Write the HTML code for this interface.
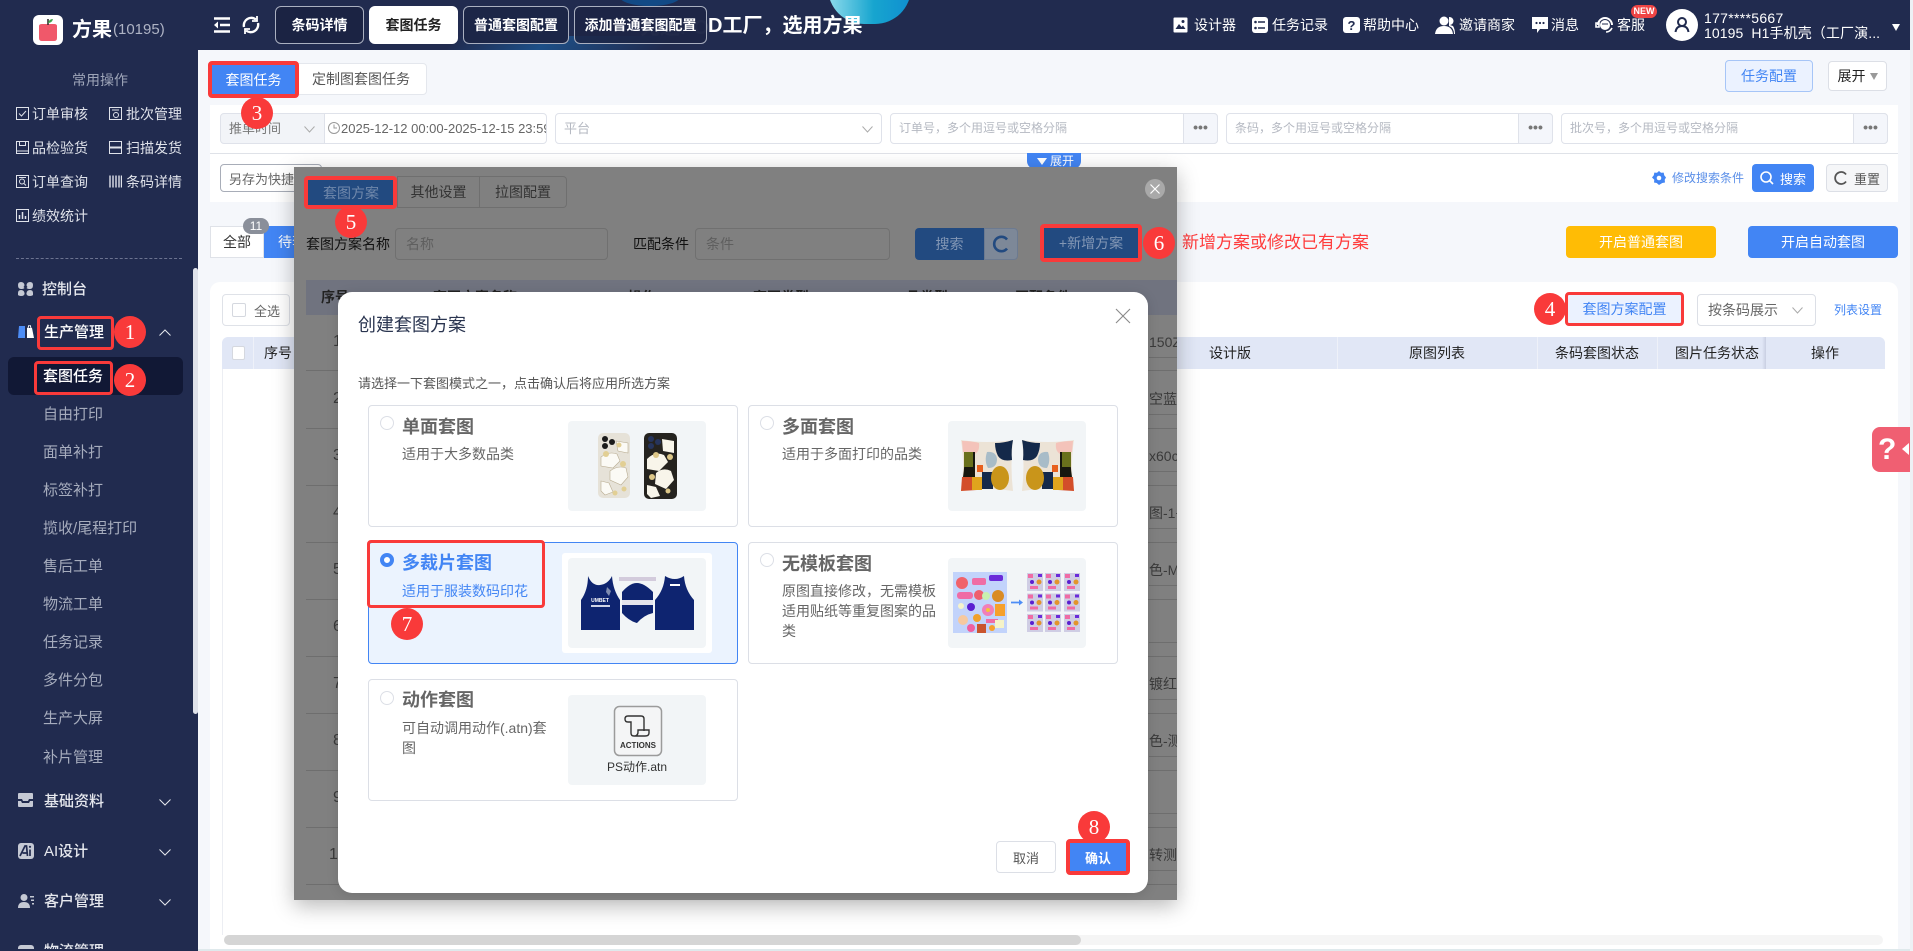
<!DOCTYPE html>
<html lang="zh-CN">
<head>
<meta charset="utf-8">
<title>方果 套图任务</title>
<style>
*{box-sizing:border-box}
html,body{margin:0;padding:0}
body{position:relative;width:1913px;height:951px;overflow:hidden;background:#f5f7fb;font-family:"Liberation Sans","Noto Sans CJK SC",sans-serif;font-size:14px;color:#333}
.a{position:absolute}
.t{position:absolute;white-space:nowrap;line-height:20px;height:20px}
.b{position:absolute;display:flex;align-items:center;justify-content:center;white-space:nowrap;border-radius:4px}
.c{position:absolute;width:32px;height:32px;border-radius:50%;background:#f93a3a;color:#fff;font-family:"Liberation Serif",serif;font-size:21px;line-height:32px;text-align:center;z-index:30}
.r{position:absolute;border:3px solid #f93a3a;border-radius:4px;z-index:29}
.r4{border-width:4px}
.side{color:#dfe2ea}
.sub{color:#a6acbd;font-size:15px}
.nav{color:#e6e8ee;font-size:15px;font-weight:500}
.tab{position:absolute;top:6px;height:38px;border:1px solid #aab0c0;border-radius:6px;display:flex;align-items:center;justify-content:center;color:#fff;font-weight:700;font-size:14px;white-space:nowrap}
.inp{position:absolute;top:113px;height:31px;background:#fff;border:1px solid #dfe2ea;border-radius:4px;font-size:12px;color:#b5b9c2;line-height:29px;padding-left:8px;white-space:nowrap;overflow:hidden}
.dots{position:absolute;top:113px;width:35px;height:31px;background:#f4f6fb;border:1px solid #dfe2ea;border-radius:0 4px 4px 0;color:#777;text-align:center;line-height:27px;font-size:14px;font-weight:700;letter-spacing:0}
.ln{position:absolute;height:1px;background:#6e6e6e}
.rt{position:absolute;left:1149px;width:28px;overflow:hidden;white-space:nowrap;color:#3a3a3a;font-size:14px;line-height:20px;height:20px}
.lnum{position:absolute;color:#3a3a3a;font-size:16px;line-height:20px}
.card{position:absolute;width:370px;height:122px;background:#fff;border:1px solid #dcdfe6;border-radius:4px}
.radio{position:absolute;width:14px;height:14px;border:1px solid #dcdfe6;border-radius:50%;background:#fff}
.ct{position:absolute;font-size:18px;font-weight:700;color:#666;line-height:24px;white-space:nowrap}
.cd{position:absolute;font-size:14px;color:#666;line-height:20px;white-space:nowrap}
.im{position:absolute;width:138px;height:90px;background:#f2f5f7;border-radius:4px;overflow:hidden}
.th{position:absolute;top:343px;color:#222;line-height:20px;white-space:nowrap}
.chev{position:absolute}
</style>
</head>
<body>

<!-- sidebar -->
<div class="a" style="left:0;top:0;width:198px;height:951px;background:#212b4f"></div>
<div class="a" style="left:193px;top:268px;width:5px;height:446px;background:#dfe2ea;border-radius:3px"></div>

<!-- header -->
<div class="a" style="left:0;top:0;width:1910px;height:50px;background:#212b4f;overflow:hidden">
  <div class="a" style="left:433px;top:36px;width:300px;height:60px;background:linear-gradient(100deg,#212b4f 0%,#1d4f87 30%,#212b4f 70%);transform:skewX(-40deg)"></div>
  <div class="a" style="left:828px;top:-40px;width:83px;height:64px;border-radius:0 0 36px 36px;background:linear-gradient(90deg,#8fdcec,#17a5cf 55%,#0f8fd0)"></div>
  <div class="a" style="left:620px;top:-12px;width:60px;height:18px;border-radius:50%;background:#124a86"></div>
</div>

<!-- logo -->
<div class="a" style="left:33px;top:15px;width:30px;height:30px;background:#fff;border-radius:6px"></div>
<svg class="a" style="left:33px;top:15px" width="30" height="30" viewBox="0 0 30 30"><path d="M6 11q0-2 3-2h12q3 0 3 2v12q0 3-3 3H9q-3 0-3-3z" fill="#f0586a"/><path d="M15 10V4" stroke="#333" stroke-width="1.6"/><path d="M15 8q1-4 5-4q-1 4-5 4z" fill="#3fa34d"/></svg>
<div class="t" style="left:72px;top:20px;font-size:20px;font-weight:700;color:#fff">方果</div>
<div class="t" style="left:113px;top:20px;font-size:15px;color:#aeb3c4">(10195)</div>

<svg class="a" style="left:213px;top:17px" width="18" height="16" viewBox="0 0 18 16"><path d="M1 1.500h16M7 8h10M1 14.500h16" stroke="#fff" stroke-width="2.400"/><path d="M5 4.500 1 8l4 3.500z" fill="#fff"/></svg>
<svg class="a" style="left:241px;top:15px" width="20" height="20" viewBox="0 0 20 20" fill="none" stroke="#fff" stroke-width="2.400"><path d="M3 12a7.500 7.500 0 0 1 12-7.500"/><path d="M17 8a7.500 7.500 0 0 1-12 7.500"/><path d="M16 1v5h-5M4 19v-5h5" stroke-width="1.800"/></svg>

<div class="tab" style="left:275px;width:89px;background:#1b2343">条码详情</div>
<div class="tab" style="left:369px;width:89px;background:#fff;color:#222;border-color:#fff">套图任务</div>
<div class="tab" style="left:463px;width:106px;background:#1c2647">普通套图配置</div>

<!-- banner text -->
<div class="t" style="left:640px;top:15px;font-size:20px;font-weight:700;color:#3c4565;line-height:26px;height:26px">先进PO</div>
<div class="t" style="left:708px;top:13px;font-size:20px;font-weight:700;color:#fff;line-height:26px;height:26px">D工厂，选用方果</div>
<div class="tab" style="left:574px;width:133px;background:rgba(28,36,68,.82)">添加普通套图配置</div>

<!-- header right -->
<svg class="a" style="left:1173px;top:17px" width="15" height="16" viewBox="0 0 15 16"><rect x=".5" y=".5" width="14" height="15" rx="1" fill="#fff"/><path d="M2.500 12 6 7l2.500 3L10 8.500 12.500 12z" fill="#212b4f"/><circle cx="10" cy="4.500" r="1.500" fill="#212b4f"/></svg>
<div class="t" style="left:1194px;top:15px;color:#fff">设计器</div>
<svg class="a" style="left:1252px;top:17px" width="16" height="16" viewBox="0 0 16 16"><rect width="16" height="16" rx="3" fill="#fff"/><path d="M6 5h7M6 11h7" stroke="#212b4f" stroke-width="1.600"/><circle cx="3.500" cy="5" r="1.300" fill="#212b4f"/><circle cx="3.500" cy="11" r="1.300" fill="#212b4f"/></svg>
<div class="t" style="left:1272px;top:15px;color:#fff">任务记录</div>
<svg class="a" style="left:1343px;top:17px" width="17" height="16" viewBox="0 0 17 16"><rect width="17" height="16" rx="3" fill="#fff"/><text x="8.500" y="13" font-size="13" font-weight="700" text-anchor="middle" fill="#212b4f" font-family="Liberation Sans">?</text></svg>
<div class="t" style="left:1363px;top:15px;color:#fff">帮助中心</div>
<svg class="a" style="left:1435px;top:16px" width="20" height="18" viewBox="0 0 20 18" fill="#fff"><circle cx="9" cy="5" r="4.500"/><path d="M0 18q1-8 9-8t9 8z"/><path d="M14 1a4 4 0 0 1 1 8l3 1q2 3 2 8h-1q0-6-5-8z"/></svg>
<div class="t" style="left:1459px;top:15px;color:#fff">邀请商家</div>
<svg class="a" style="left:1531px;top:16px" width="18" height="18" viewBox="0 0 18 18"><path d="M1 1h16v12H9l-3 4v-4H1z" fill="#fff"/><circle cx="5.500" cy="7" r="1.100" fill="#212b4f"/><circle cx="9" cy="7" r="1.100" fill="#212b4f"/><circle cx="12.500" cy="7" r="1.100" fill="#212b4f"/></svg>
<div class="t" style="left:1551px;top:15px;color:#fff">消息</div>
<svg class="a" style="left:1595px;top:16px" width="19" height="18" viewBox="0 0 19 18" fill="none" stroke="#fff"><path d="M3 9a7 7 0 0 1 14 0" stroke-width="2"/><circle cx="10" cy="9" r="5" fill="#fff" stroke="none"/><path d="M1 7v4h3V7zM11 16q4 0 6-4" stroke-width="1.600"/><path d="M7 8h6" stroke="#212b4f"/></svg>
<div class="t" style="left:1617px;top:15px;color:#fff">客服</div>
<div class="a" style="left:1631px;top:5px;width:26px;height:13px;background:#ee4444;border-radius:7px;color:#fff;font-size:9px;font-weight:700;line-height:13px;text-align:center">NEW</div>
<div class="a" style="left:1666px;top:9px;width:32px;height:32px;border-radius:50%;background:#fff"></div>
<svg class="a" style="left:1674px;top:16px" width="16" height="17" viewBox="0 0 16 17" fill="none" stroke="#212b4f" stroke-width="2"><circle cx="8" cy="6" r="4"/><path d="M1.500 16q1-6 6.500-6t6.500 6"/></svg>
<div class="t" style="left:1704px;top:8px;color:#fff;font-size:14px;letter-spacing:.3px">177****5667</div>
<div class="t" style="left:1704px;top:23px;color:#fff;font-size:14px;letter-spacing:.1px">10195&nbsp; H1手机壳（工厂演...</div>
<div class="a" style="left:1892px;top:24px;width:0;height:0;border-left:4.500px solid transparent;border-right:4.500px solid transparent;border-top:7px solid #fff"></div>

<!-- sidebar contents -->
<div class="t" style="left:72px;top:70px;color:#9ea5b8">常用操作</div>
<svg class="a" style="left:16px;top:107px" width="13" height="13" viewBox="0 0 13 13" fill="none" stroke="#dfe2ea"><rect x=".5" y=".5" width="12" height="12"/><path d="M3 6.500l2.500 2.500L10 4"/></svg>
<div class="t side" style="left:32px;top:104px">订单审核</div>
<svg class="a" style="left:109px;top:107px" width="13" height="13" viewBox="0 0 13 13" fill="none" stroke="#dfe2ea"><rect x=".5" y=".5" width="12" height="12"/><path d="M3 3h7"/><circle cx="7" cy="8" r="2.500"/></svg>
<div class="t side" style="left:126px;top:104px">批次管理</div>
<svg class="a" style="left:16px;top:141px" width="13" height="13" viewBox="0 0 13 13" fill="none" stroke="#dfe2ea"><path d="M.5.500h12v12H.500zM.5 10h12M3.500.5v4h6v-4"/></svg>
<div class="t side" style="left:32px;top:138px">品检验货</div>
<svg class="a" style="left:109px;top:141px" width="13" height="13" viewBox="0 0 13 13" fill="none" stroke="#dfe2ea"><rect x=".5" y=".5" width="12" height="12"/><path d="M0 6.500h13" stroke-width="2"/></svg>
<div class="t side" style="left:126px;top:138px">扫描发货</div>
<svg class="a" style="left:16px;top:175px" width="13" height="13" viewBox="0 0 13 13" fill="none" stroke="#dfe2ea"><rect x=".5" y=".5" width="12" height="12"/><circle cx="6" cy="6.500" r="2.500"/><path d="M8 8.500l2 2M3 2.500h7"/></svg>
<div class="t side" style="left:32px;top:172px">订单查询</div>
<svg class="a" style="left:109px;top:175px" width="13" height="13" viewBox="0 0 13 13" stroke="#dfe2ea"><path d="M1 .5v12M4 .5v12M7 .5v12M10 .5v12M12.500 .5v12" stroke-width="1.400"/></svg>
<div class="t side" style="left:126px;top:172px">条码详情</div>
<svg class="a" style="left:16px;top:209px" width="13" height="13" viewBox="0 0 13 13" fill="none" stroke="#dfe2ea"><rect x=".5" y=".5" width="12" height="12"/><path d="M3.500 10V6M6.500 10V3M9.500 10V7" stroke-width="1.500"/></svg>
<div class="t side" style="left:32px;top:206px">绩效统计</div>
<div class="a" style="left:16px;top:258px;width:166px;border-top:1px dashed #6c7390"></div>

<svg class="a" style="left:18px;top:282px" width="15" height="14" viewBox="0 0 15 14" fill="#c5c9d4"><path d="M0 3q0-3 3-3t3.500 3q0 1-1 2l1 1q-1 1-3.500 1Q0 7 0 3zM15 3q0-3-3-3T8.500 3q0 1 1 2l-1 1q1 1 3.500 1 3 0 3-4zM0 11q0-3 3-3t3.500 3-3.500 3-3-3zM15 11q0-3-3-3t-3.500 3 3.500 3 3-3z"/></svg>
<div class="t nav" style="left:42px;top:280px">控制台</div>
<svg class="a" style="left:18px;top:325px" width="16" height="14" viewBox="0 0 16 14"><path d="M1 1h6v12H0z" fill="#4d8df6"/><path d="M9 3h5l2 10H9z" fill="#fff"/><path d="M10 3l1-3M13 3l-1-3" stroke="#fff"/></svg>
<div class="t nav" style="left:44px;top:323px;color:#fff">生产管理</div>
<svg class="chev" style="left:159px;top:329px" width="12" height="7" viewBox="0 0 12 7" fill="none" stroke="#e6e8ee"><path d="M.5 6.500 6 1l5.500 5.500"/></svg>
<div class="a" style="left:8px;top:357px;width:175px;height:38px;background:#111835;border-radius:6px"></div>
<div class="t nav" style="left:43px;top:367px;color:#fff">套图任务</div>
<div class="t sub" style="left:43px;top:405px">自由打印</div>
<div class="t sub" style="left:43px;top:443px">面单补打</div>
<div class="t sub" style="left:43px;top:481px">标签补打</div>
<div class="t sub" style="left:43px;top:519px">揽收/尾程打印</div>
<div class="t sub" style="left:43px;top:557px">售后工单</div>
<div class="t sub" style="left:43px;top:595px">物流工单</div>
<div class="t sub" style="left:43px;top:633px">任务记录</div>
<div class="t sub" style="left:43px;top:671px">多件分包</div>
<div class="t sub" style="left:43px;top:709px">生产大屏</div>
<div class="t sub" style="left:43px;top:748px">补片管理</div>

<svg class="a" style="left:18px;top:793px" width="15" height="14" viewBox="0 0 15 14" fill="#c5c9d4"><path d="M0 1q0-1 1-1h13q1 0 1 1v5h-4l-1 2H5L4 6H0zM0 8h3l1 2h7l1-2h3v5q0 1-1 1H1q-1 0-1-1z"/></svg>
<div class="t nav" style="left:44px;top:792px">基础资料</div>
<svg class="chev" style="left:159px;top:799px" width="12" height="7" viewBox="0 0 12 7" fill="none" stroke="#e6e8ee"><path d="M.5.500 6 6l5.500-5.500"/></svg>
<svg class="a" style="left:18px;top:843px" width="16" height="16" viewBox="0 0 16 16"><rect width="16" height="16" rx="3" fill="#c5c9d4"/><path d="M2 13 7 3h1.500l1 10M4.500 10h4.500M12 6.500V13" stroke="#212b4f" stroke-width="1.700" fill="none"/><circle cx="12" cy="3.800" r="1.100" fill="#212b4f"/></svg>
<div class="t nav" style="left:44px;top:842px">AI设计</div>
<svg class="chev" style="left:159px;top:849px" width="12" height="7" viewBox="0 0 12 7" fill="none" stroke="#e6e8ee"><path d="M.5.500 6 6l5.500-5.500"/></svg>
<svg class="a" style="left:18px;top:894px" width="16" height="14" viewBox="0 0 16 14" fill="#c5c9d4"><circle cx="6" cy="3.500" r="3.500"/><path d="M0 14q0-6 6-6t6 6zM12 2h4v1.500h-4zM13 5.500h3V7h-3zM14 9h2v1.500h-2z"/></svg>
<div class="t nav" style="left:44px;top:892px">客户管理</div>
<svg class="chev" style="left:159px;top:899px" width="12" height="7" viewBox="0 0 12 7" fill="none" stroke="#e6e8ee"><path d="M.5.500 6 6l5.500-5.500"/></svg>
<div class="a" style="left:18px;top:945px;width:16px;height:6px;background:#c5c9d4;border-radius:3px 3px 0 0"></div>
<div class="t nav" style="left:44px;top:943px;height:8px;overflow:hidden;line-height:18px">物流管理</div>

<!-- main top -->
<div class="b" style="left:212px;top:65px;width:83px;height:29px;background:#4285f4;color:#fff;border-radius:0">套图任务</div>
<div class="b" style="left:295px;top:63px;width:132px;height:32px;background:#fff;border:1px solid #e4e7ed;color:#555;border-radius:0 4px 4px 0">定制图套图任务</div>
<div class="b" style="left:1725px;top:60px;width:88px;height:32px;background:#ebf2ff;border:1px solid #a6c5f7;color:#4285f4">任务配置</div>
<div class="b" style="left:1828px;top:61px;width:59px;height:30px;background:#fff;border:1px solid #dcdfe6;color:#222">展开<span style="display:inline-block;margin-left:4px;border-left:4.500px solid transparent;border-right:4.500px solid transparent;border-top:7px solid #999"></span></div>

<!-- filter panel -->
<div class="a" style="left:210px;top:105px;width:1688px;height:97px;background:#fff"></div>
<div class="a" style="left:210px;top:153px;width:1688px;height:1px;background:#dfe2e8"></div>
<div class="inp" style="left:220px;width:105px;background:#f2f4f8;color:#777;font-size:13px;border-radius:4px 0 0 4px">推单时间</div>
<svg class="a" style="left:304px;top:126px" width="11" height="7" viewBox="0 0 11 7" fill="none" stroke="#aaa"><path d="M.5.500 5.500 6l5-5.500"/></svg>
<div class="inp" style="left:324px;width:223px;font-size:13px;color:#666;padding-left:16px;border-radius:0 4px 4px 0">2025-12-12 00:00-2025-12-15 23:59</div>
<svg class="a" style="left:328px;top:122px" width="12" height="12" viewBox="0 0 12 12" fill="none" stroke="#999"><circle cx="6" cy="6" r="5.500"/><path d="M6 2.500V6h3"/></svg>
<div class="inp" style="left:555px;width:327px;font-size:13px;">平台</div>
<svg class="a" style="left:862px;top:126px" width="11" height="7" viewBox="0 0 11 7" fill="none" stroke="#aaa"><path d="M.5.500 5.500 6l5-5.500"/></svg>
<div class="inp" style="left:890px;width:328px">订单号，多个用逗号或空格分隔</div><div class="dots" style="left:1183px">•••</div>
<div class="inp" style="left:1226px;width:327px">条码，多个用逗号或空格分隔</div><div class="dots" style="left:1518px">•••</div>
<div class="inp" style="left:1561px;width:327px">批次号，多个用逗号或空格分隔</div><div class="dots" style="left:1853px">•••</div>

<div class="a" style="left:1027px;top:153px;width:54px;height:16px;background:#4285f4;border-radius:0 0 8px 8px;color:#fff;font-size:12px;line-height:16px;padding-left:23px">展开</div>
<div class="a" style="left:1037px;top:158px;border-left:5px solid transparent;border-right:5px solid transparent;border-top:7px solid #fff"></div>

<div class="b" style="left:220px;top:164px;width:102px;height:28px;background:#fff;border:1px solid #a8adb8;color:#666;font-size:13px;justify-content:flex-start;padding-left:8px;overflow:hidden">另存为快捷查询</div>

<svg class="a" style="left:1652px;top:171px" width="14" height="14" viewBox="0 0 14 14"><path d="M7 0l2 1.800 2.700-.2.500 2.700L14 6.500l-1.300 2.300.3 2.700-2.700.5L7 14l-2.300-2-2.700-.5.300-2.700L0 6.500l1.800-2.200.500-2.700L5 1.800z" fill="#4285f4"/><circle cx="7" cy="7" r="2.300" fill="#fff"/></svg>
<div class="t" style="left:1672px;top:168px;color:#5b8fe8;font-size:12px">修改搜索条件</div>
<div class="b" style="left:1752px;top:164px;width:62px;height:28px;background:#4285f4;color:#fff;font-size:13px"><svg width="14" height="14" viewBox="0 0 14 14" fill="none" stroke="#fff" stroke-width="1.600" style="margin-right:6px"><circle cx="6" cy="6" r="5"/><path d="M9.500 9.500 13 13"/></svg>搜索</div>
<div class="b" style="left:1826px;top:164px;width:62px;height:28px;background:#f5f6f8;border:1px solid #dcdfe6;color:#555;font-size:13px"><svg width="14" height="14" viewBox="0 0 14 14" fill="none" stroke="#555" stroke-width="1.800" style="margin-right:6px"><path d="M12 3.500A6 6 0 1 0 12 10.500"/></svg>重置</div>

<!-- status row -->
<div class="b" style="left:210px;top:226px;width:54px;height:32px;background:#fff;border:1px solid #dfe2e8;color:#333;border-radius:0">全部</div>
<div class="b" style="left:264px;top:226px;width:60px;height:32px;background:#4285f4;color:#fff;border-radius:0;justify-content:flex-start;padding-left:14px">待套图</div>
<div class="a" style="left:243px;top:218px;width:26px;height:16px;background:#8a8f9a;border-radius:8px;color:#fff;font-size:12px;line-height:16px;text-align:center">11</div>
<div class="t" style="left:1182px;top:233px;color:#ff3b3b;font-size:17px">新增方案或修改已有方案</div>
<div class="b" style="left:1566px;top:226px;width:150px;height:32px;background:#ffbc05;color:#fff">开启普通套图</div>
<div class="b" style="left:1748px;top:226px;width:150px;height:32px;background:#4285f4;color:#fff">开启自动套图</div>

<!-- table panel -->
<div class="a" style="left:210px;top:282px;width:1688px;height:667px;background:#fff;border-radius:10px 10px 0 0"></div>
<div class="b" style="left:222px;top:294px;width:68px;height:32px;background:#fff;border:1px solid #dfe2e8;color:#666;font-size:13px;justify-content:flex-start;padding-left:9px"><span style="display:inline-block;width:14px;height:14px;border:1px solid #d5d8df;border-radius:2px;margin-right:8px"></span>全选</div>
<div class="b" style="left:1568px;top:295px;width:113px;height:28px;background:#ebf2ff;color:#4285f4;font-size:14px;border-radius:0">套图方案配置</div>
<div class="b" style="left:1697px;top:294px;width:119px;height:32px;background:#fff;border:1px solid #dcdfe6;color:#666;justify-content:flex-start;padding-left:10px">按条码展示</div>
<svg class="a" style="left:1792px;top:307px" width="11" height="7" viewBox="0 0 11 7" fill="none" stroke="#aaa"><path d="M.5.500 5.500 6l5-5.500"/></svg>
<div class="t" style="left:1834px;top:300px;color:#4285f4;font-size:12px">列表设置</div>

<div class="a" style="left:222px;top:337px;width:1663px;height:32px;background:#e1e7f6;border-radius:6px 6px 0 0"></div>
<div class="a" style="left:222px;top:369px;width:1px;height:566px;background:#eceef3"></div>
<div class="a" style="left:232px;top:346px;width:13px;height:14px;background:#fff;border:1px solid #d5d8df;border-radius:2px"></div>
<div class="a" style="left:253px;top:337px;width:1px;height:32px;background:#eef1f9"></div>
<div class="th" style="left:264px">序号</div>
<div class="th" style="left:1209px">设计版</div>
<div class="th" style="left:1409px">原图列表</div>
<div class="th" style="left:1555px">条码套图状态</div>
<div class="th" style="left:1675px">图片任务状态</div>
<div class="th" style="left:1811px">操作</div>
<div class="a" style="left:1337px;top:337px;width:1px;height:32px;background:#eef1f9"></div>
<div class="a" style="left:1537px;top:337px;width:1px;height:32px;background:#eef1f9"></div>
<div class="a" style="left:1657px;top:337px;width:1px;height:32px;background:#eef1f9"></div>
<div class="a" style="left:1762px;top:337px;width:4px;height:32px;background:linear-gradient(90deg,#e1e7f6,#c9cfe2)"></div>

<!-- scrollbar -->
<div class="a" style="left:224px;top:935px;width:1659px;height:10px;background:#f5f5f5;border-radius:5px"></div>
<div class="a" style="left:224px;top:935px;width:857px;height:10px;background:#d5d5d5;border-radius:5px"></div>
<div class="a" style="left:0;top:949px;width:1913px;height:2px;background:#dfe9ec"></div>
<div class="a" style="left:1910px;top:0;width:3px;height:951px;background:#edf1f5"></div>
<div class="a" style="left:0;top:949px;width:198px;height:2px;background:#212b4f"></div>

<!-- question float -->
<div class="a" style="left:1872px;top:427px;width:38px;height:45px;background:#f05f72;border-radius:8px 0 0 8px;color:#fff;font-size:30px;font-weight:700;line-height:45px;padding-left:6px">?</div>
<div class="a" style="left:1902px;top:443px;border-top:6px solid transparent;border-bottom:6px solid transparent;border-right:7px solid #fff"></div>

<!-- dim dialog -->
<div class="a" style="left:294px;top:167px;width:883px;height:733px;background:#808080;box-shadow:0 6px 20px rgba(0,0,0,.28)"></div>
<div class="b" style="left:307px;top:179px;width:88px;height:27px;background:#224a80;color:#7088ab;border-radius:0">套图方案</div>
<div class="b" style="left:397px;top:176px;width:83px;height:32px;border:1px solid #6f6f6f;color:#333;border-radius:0">其他设置</div>
<div class="b" style="left:480px;top:176px;width:87px;height:32px;border:1px solid #6f6f6f;border-left:none;color:#333;border-radius:0 4px 4px 0">拉图配置</div>
<div class="a" style="left:1145px;top:179px;width:20px;height:20px;border-radius:50%;background:#a9a9a9"></div>
<svg class="a" style="left:1145px;top:179px" width="20" height="20" viewBox="0 0 20 20" stroke="#fff" stroke-width="1.200"><path d="M5.500 5.500l9 9M14.500 5.500l-9 9"/></svg>
<div class="t" style="left:306px;top:234px;color:#111">套图方案名称</div>
<div class="a" style="left:395px;top:228px;width:213px;height:32px;border:1px solid #707070;border-radius:4px;color:#5f5f5f;line-height:30px;padding-left:10px">名称</div>
<div class="t" style="left:633px;top:234px;color:#111">匹配条件</div>
<div class="a" style="left:695px;top:228px;width:195px;height:32px;border:1px solid #707070;border-radius:4px;color:#5f5f5f;line-height:30px;padding-left:10px">条件</div>
<div class="b" style="left:915px;top:228px;width:69px;height:32px;background:#224a80;color:#8397b5;border-radius:4px 0 0 4px">搜索</div>
<div class="a" style="left:984px;top:228px;width:34px;height:32px;background:#7d8898;border:1px solid #6c7a90;border-radius:0 4px 4px 0"></div>
<svg class="a" style="left:992px;top:235px" width="18" height="18" viewBox="0 0 18 18" fill="none" stroke="#224a80" stroke-width="2.600"><path d="M15 4.500A7.200 7.200 0 1 0 15 13.500"/></svg>
<div class="b" style="left:1044px;top:228px;width:94px;height:30px;background:#224a80;color:#8397b5;border-radius:0">+新增方案</div>

<div class="a" style="left:306px;top:280px;width:871px;height:35px;background:#70737f"></div>
<div class="t" style="left:321px;top:287px;font-weight:700;color:#222">序号</div>
<div class="t" style="left:433px;top:287px;font-weight:700;color:#222">套图方案名称</div>
<div class="t" style="left:628px;top:287px;font-weight:700;color:#222">操作</div>
<div class="t" style="left:753px;top:287px;font-weight:700;color:#222">套图类型</div>
<div class="t" style="left:906px;top:287px;font-weight:700;color:#222">品类型</div>
<div class="t" style="left:1015px;top:287px;font-weight:700;color:#222">匹配条件</div>

<!-- dim rows -->
<div class="ln" style="left:306px;top:370px;width:871px"></div>
<div class="ln" style="left:306px;top:428px;width:871px"></div>
<div class="ln" style="left:306px;top:485px;width:871px"></div>
<div class="ln" style="left:306px;top:542px;width:871px"></div>
<div class="ln" style="left:306px;top:599px;width:871px"></div>
<div class="ln" style="left:306px;top:656px;width:871px"></div>
<div class="ln" style="left:306px;top:713px;width:871px"></div>
<div class="ln" style="left:306px;top:770px;width:871px"></div>
<div class="ln" style="left:306px;top:827px;width:871px"></div>
<div class="ln" style="left:306px;top:884px;width:871px"></div>
<div class="ln" style="left:1149px;top:357px;width:28px"></div>
<div class="ln" style="left:1149px;top:414px;width:28px"></div>
<div class="ln" style="left:1149px;top:471px;width:28px"></div>
<div class="ln" style="left:1149px;top:528px;width:28px"></div>
<div class="ln" style="left:1149px;top:585px;width:28px"></div>
<div class="ln" style="left:1149px;top:642px;width:28px"></div>
<div class="ln" style="left:1149px;top:699px;width:28px"></div>
<div class="ln" style="left:1149px;top:756px;width:28px"></div>
<div class="ln" style="left:1149px;top:813px;width:28px"></div>
<div class="ln" style="left:1149px;top:870px;width:28px"></div>

<div class="lnum" style="left:333px;top:332px">1</div>
<div class="lnum" style="left:333px;top:389px">2</div>
<div class="lnum" style="left:333px;top:446px">3</div>
<div class="lnum" style="left:333px;top:503px">4</div>
<div class="lnum" style="left:333px;top:560px">5</div>
<div class="lnum" style="left:333px;top:617px">6</div>
<div class="lnum" style="left:333px;top:674px">7</div>
<div class="lnum" style="left:333px;top:731px">8</div>
<div class="lnum" style="left:333px;top:788px">9</div>
<div class="lnum" style="left:329px;top:845px">10</div>

<div class="rt" style="top:332px">150Z</div>
<div class="rt" style="top:389px">空蓝-</div>
<div class="rt" style="top:446px">x60cm</div>
<div class="rt" style="top:503px">图-1+</div>
<div class="rt" style="top:560px">色-M,</div>
<div class="rt" style="top:674px">镀红-</div>
<div class="rt" style="top:731px">色-测</div>
<div class="rt" style="top:845px">转测试</div>

<!-- white modal -->
<div class="a" style="left:338px;top:292px;width:810px;height:601px;background:#fff;border-radius:14px;box-shadow:0 2px 12px rgba(0,0,0,.12)"></div>
<div class="t" style="left:358px;top:313px;font-size:18px;line-height:24px;height:24px;color:#2a3550">创建套图方案</div>
<svg class="a" style="left:1115px;top:308px" width="16" height="16" viewBox="0 0 16 16" stroke="#8a8a8a" stroke-width="1.100"><path d="M1 1l14 14M15 1 1 15"/></svg>
<div class="t" style="left:358px;top:374px;font-size:13px;color:#555">请选择一下套图模式之一，点击确认后将应用所选方案</div>

<!-- card 1 -->
<div class="card" style="left:368px;top:405px"></div>
<div class="radio" style="left:380px;top:416px"></div>
<div class="ct" style="left:402px;top:415px">单面套图</div>
<div class="cd" style="left:402px;top:444px">适用于大多数品类</div>
<div class="im" style="left:568px;top:421px">
<svg width="138" height="90" viewBox="0 0 138 90">
<rect x="30" y="12" width="32" height="65" rx="5" fill="#e6e2d8"/>
<rect x="76" y="12" width="33" height="66" rx="5" fill="#25231f"/>
<circle cx="37" cy="18" r="3" fill="#1b1b1b"/><circle cx="37" cy="25" r="3" fill="#1b1b1b"/><circle cx="44" cy="21" r="3" fill="#1b1b1b"/>
<circle cx="83" cy="18" r="3" fill="#26345c"/><circle cx="83" cy="25" r="3" fill="#26345c"/><circle cx="90" cy="21" r="3" fill="#26345c"/>
<path d="M33 36q8-6 16-3l3 7-7 7-12-2zM42 50q8-6 16-3l2 9-7 8-11-5zM33 60l8 2 4 9-8 3-4-4zM48 20l12 2v10l-10-2z" fill="#fbfaf5" stroke="#b9ad92" stroke-width=".6"/>
<circle cx="38" cy="33" r="3" fill="#e2cf94"/><circle cx="55" cy="43" r="3" fill="#e2cf94"/><circle cx="47" cy="72" r="2.500" fill="#e2cf94"/><circle cx="56" cy="68" r="2.500" fill="#e2cf94"/><circle cx="51" cy="24" r="2.500" fill="#e2cf94"/>
<path d="M79 38q8-8 17-4l4 7-9 9-12-2zM88 52q7-6 15-2l3 9-8 9-11-5zM79 64l9 2 4 9-9 2-4-4zM94 18l12 2v12l-11-2z" fill="#f8f5ea"/>
<circle cx="88" cy="34" r="3" fill="#dcc687"/><circle cx="102" cy="36" r="3" fill="#dcc687"/><circle cx="84" cy="56" r="3" fill="#dcc687"/><circle cx="100" cy="70" r="2.500" fill="#dcc687"/>
</svg></div>

<!-- card 2 -->
<div class="card" style="left:748px;top:405px"></div>
<div class="radio" style="left:760px;top:416px"></div>
<div class="ct" style="left:782px;top:415px">多面套图</div>
<div class="cd" style="left:782px;top:444px">适用于多面打印的品类</div>
<div class="im" style="left:948px;top:421px">
<svg width="138" height="90" viewBox="0 0 138 90">
<g>
<path d="M13 19q26 4 52 0q-3 26 0 51q-26-4-52 0q4-26 0-51z" fill="#ece3d6"/>
<path d="M14 20q10 0 17 2q1 8-4 11l-12-2z" fill="#f4c3ba"/>
<path d="M16 31h11v25H15q2-12 1-25z" fill="#17170f"/>
<path d="M16 31h9v15h-9z" fill="#69701c"/>
<path d="M47 22q9 0 18-3-2 10-1 20-10 2-14-4-3-6-3-13z" fill="#14294a"/>
<path d="M39 31q9-1 10 7 0 9-9 9-4-7-1-16z" fill="#a8bcc8"/>
<path d="M34 51h11v17H34z" fill="#14294a"/>
<ellipse cx="52" cy="57" rx="9" ry="12" fill="#c9951a"/>
<path d="M14 56h15v13l-16 1z" fill="#d34e2a"/><path d="M24 56h10v13H24z" fill="#e0a41d"/><path d="M29 44h6v7h-6z" fill="#e8601d"/>
</g>
<g transform="translate(139,0) scale(-1,1)">
<path d="M13 19q26 4 52 0q-3 26 0 51q-26-4-52 0q4-26 0-51z" fill="#ece3d6"/>
<path d="M14 20q10 0 17 2q1 8-4 11l-12-2z" fill="#f4c3ba"/>
<path d="M16 31h11v25H15q2-12 1-25z" fill="#17170f"/>
<path d="M16 31h9v15h-9z" fill="#69701c"/>
<path d="M47 22q9 0 18-3-2 10-1 20-10 2-14-4-3-6-3-13z" fill="#14294a"/>
<path d="M39 31q9-1 10 7 0 9-9 9-4-7-1-16z" fill="#a8bcc8"/>
<path d="M34 51h11v17H34z" fill="#14294a"/>
<ellipse cx="52" cy="57" rx="9" ry="12" fill="#c9951a"/>
<path d="M14 56h15v13l-16 1z" fill="#d34e2a"/><path d="M24 56h10v13H24z" fill="#e0a41d"/><path d="M29 44h6v7h-6z" fill="#e8601d"/>
</g>
</svg></div>

<!-- card 3 selected -->
<div class="card" style="left:368px;top:542px;background:#ebf3fe;border-color:#4285f4"></div>
<div class="radio" style="left:380px;top:553px;border:4px solid #4285f4"></div>
<div class="ct" style="left:402px;top:551px;color:#4285f4">多裁片套图</div>
<div class="cd" style="left:402px;top:581px;color:#4285f4">适用于服装数码印花</div>
<div class="a" style="left:562px;top:553px;width:150px;height:100px;background:#fff;border-radius:3px"></div>
<div class="im" style="left:568px;top:558px">
<svg width="138" height="90" viewBox="0 0 138 90">
<path d="M20 18q4 10 12 9t12-9q1 14 8 24v30H13V42q7-10 7-24z" fill="#0e2470"/>
<path d="M97 18q10 6 19 0q1 14 10 24v30H87V42q9-10 10-24z" fill="#0e2470"/>
<path d="M51 19h37v4H51z" fill="#d3cbdc"/>
<path d="M54 34q8-9 15-9t16 9v8H54z" fill="#0e2470"/>
<path d="M54 42h31v5H54z" fill="#e4e4ec"/>
<path d="M54 47h31v8q-9 2-16 10-8-2-15-10z" fill="#0e2470"/>
<text x="32" y="44" font-family="Liberation Sans" font-weight="700" font-size="5" fill="#fff" text-anchor="middle">UMBET</text>
<rect x="23" y="47" width="19" height="2" fill="#cfd3e6"/>
<rect x="102" y="26" width="10" height="2" fill="#fff"/>
<path d="M39 29l4 4-2 5-3-4z" fill="#7f8cb0"/>
</svg></div>

<!-- card 4 -->
<div class="card" style="left:748px;top:542px"></div>
<div class="radio" style="left:760px;top:553px"></div>
<div class="ct" style="left:782px;top:552px">无模板套图</div>
<div class="cd" style="left:782px;top:581px">原图直接修改，无需模板</div>
<div class="cd" style="left:782px;top:601px">适用贴纸等重复图案的品</div>
<div class="cd" style="left:782px;top:621px">类</div>
<div class="im" style="left:948px;top:558px">
<svg width="138" height="90" viewBox="0 0 138 90">
<rect x="5" y="14" width="54" height="61" fill="#c2d3fb"/>
<circle cx="14" cy="25" r="6" fill="#f0626a"/><rect x="24" y="20" width="14" height="7" rx="2" fill="#ef6ca5"/><rect x="41" y="17" width="14" height="6" rx="2" fill="#6a2bd9"/>
<rect x="9" y="34" width="16" height="7" rx="3" fill="#ef6ca5"/><circle cx="31" cy="37" r="5" fill="#ee5f6d"/><circle cx="38" cy="38" r="4" fill="#c8f0b0"/><circle cx="50" cy="38" r="6" fill="#d98b25"/>
<circle cx="13" cy="48" r="3" fill="#f6f3cc"/><circle cx="23" cy="49" r="4" fill="#5a1fd1"/><circle cx="40" cy="52" r="6" fill="#f07fb8"/><circle cx="40" cy="52" r="2" fill="#f5c337"/>
<rect x="47" y="46" width="10" height="12" fill="#f6a02c"/>
<circle cx="15" cy="62" r="5" fill="#f6c9a0"/><circle cx="29" cy="60" r="4" fill="#f0a12c"/><rect x="38" y="61" width="12" height="4" fill="#ef6ca5"/><rect x="47" y="62" width="9" height="8" fill="#f5f3c8"/>
<circle cx="23" cy="70" r="4" fill="#ef5fa0"/><rect x="29" y="66" width="9" height="9" fill="#c9542e"/><circle cx="44" cy="70" r="3" fill="#f6a02c"/>
<path d="M63 44.500h9" stroke="#4d8df6" stroke-width="1.800"/><path d="M71 41.500 75 44.500 71 47.500z" fill="#4d8df6"/>
<g><rect x="79" y="15" width="16" height="18" fill="#cfcde4"/><rect x="80" y="16" width="5" height="4" fill="#ef6ca5"/><rect x="90" y="16" width="4" height="3" fill="#6a2bd9"/><circle cx="84" cy="24" r="2" fill="#5a1fd1"/><circle cx="91" cy="24" r="2.500" fill="#e3942b"/><rect x="82" y="28" width="8" height="3" fill="#ef6ca5"/></g>
<g transform="translate(18,0)"><rect x="79" y="15" width="16" height="18" fill="#cfcde4"/><rect x="80" y="16" width="5" height="4" fill="#ef6ca5"/><rect x="90" y="16" width="4" height="3" fill="#6a2bd9"/><circle cx="84" cy="24" r="2" fill="#5a1fd1"/><circle cx="91" cy="24" r="2.500" fill="#e3942b"/><rect x="82" y="28" width="8" height="3" fill="#ef6ca5"/></g>
<g transform="translate(37,0)"><rect x="79" y="15" width="16" height="18" fill="#cfcde4"/><rect x="80" y="16" width="5" height="4" fill="#ef6ca5"/><rect x="90" y="16" width="4" height="3" fill="#6a2bd9"/><circle cx="84" cy="24" r="2" fill="#5a1fd1"/><circle cx="91" cy="24" r="2.500" fill="#e3942b"/><rect x="82" y="28" width="8" height="3" fill="#ef6ca5"/></g>
<g transform="translate(0,20.500)"><rect x="79" y="15" width="16" height="18" fill="#cfcde4"/><rect x="80" y="16" width="5" height="4" fill="#ef6ca5"/><rect x="90" y="16" width="4" height="3" fill="#6a2bd9"/><circle cx="84" cy="24" r="2" fill="#5a1fd1"/><circle cx="91" cy="24" r="2.500" fill="#e3942b"/><rect x="82" y="28" width="8" height="3" fill="#ef6ca5"/></g>
<g transform="translate(18,20.500)"><rect x="79" y="15" width="16" height="18" fill="#cfcde4"/><rect x="80" y="16" width="5" height="4" fill="#ef6ca5"/><rect x="90" y="16" width="4" height="3" fill="#6a2bd9"/><circle cx="84" cy="24" r="2" fill="#5a1fd1"/><circle cx="91" cy="24" r="2.500" fill="#e3942b"/><rect x="82" y="28" width="8" height="3" fill="#ef6ca5"/></g>
<g transform="translate(37,20.500)"><rect x="79" y="15" width="16" height="18" fill="#cfcde4"/><rect x="80" y="16" width="5" height="4" fill="#ef6ca5"/><rect x="90" y="16" width="4" height="3" fill="#6a2bd9"/><circle cx="84" cy="24" r="2" fill="#5a1fd1"/><circle cx="91" cy="24" r="2.500" fill="#e3942b"/><rect x="82" y="28" width="8" height="3" fill="#ef6ca5"/></g>
<g transform="translate(0,41)"><rect x="79" y="15" width="16" height="18" fill="#cfcde4"/><rect x="80" y="16" width="5" height="4" fill="#ef6ca5"/><rect x="90" y="16" width="4" height="3" fill="#6a2bd9"/><circle cx="84" cy="24" r="2" fill="#5a1fd1"/><circle cx="91" cy="24" r="2.500" fill="#e3942b"/><rect x="82" y="28" width="8" height="3" fill="#ef6ca5"/></g>
<g transform="translate(18,41)"><rect x="79" y="15" width="16" height="18" fill="#cfcde4"/><rect x="80" y="16" width="5" height="4" fill="#ef6ca5"/><rect x="90" y="16" width="4" height="3" fill="#6a2bd9"/><circle cx="84" cy="24" r="2" fill="#5a1fd1"/><circle cx="91" cy="24" r="2.500" fill="#e3942b"/><rect x="82" y="28" width="8" height="3" fill="#ef6ca5"/></g>
<g transform="translate(37,41)"><rect x="79" y="15" width="16" height="18" fill="#cfcde4"/><rect x="80" y="16" width="5" height="4" fill="#ef6ca5"/><rect x="90" y="16" width="4" height="3" fill="#6a2bd9"/><circle cx="84" cy="24" r="2" fill="#5a1fd1"/><circle cx="91" cy="24" r="2.500" fill="#e3942b"/><rect x="82" y="28" width="8" height="3" fill="#ef6ca5"/></g>
</svg></div>

<!-- card 5 -->
<div class="card" style="left:368px;top:679px"></div>
<div class="radio" style="left:380px;top:691px"></div>
<div class="ct" style="left:402px;top:688px">动作套图</div>
<div class="cd" style="left:402px;top:718px">可自动调用动作(.atn)套</div>
<div class="cd" style="left:402px;top:738px">图</div>
<div class="im" style="left:568px;top:695px">
<svg width="138" height="90" viewBox="0 0 138 90">
<rect x="46.500" y="11.500" width="47" height="49" rx="5" fill="#f4f5f6" stroke="#9b9b9b" stroke-width="1.500"/>
<path d="M60 21h13q3 0 3 3v12M60 21q-3 0-3 3t3 3h3v11q0 3 3 3h11q4 0 4-3v-3H70v2q0 4-4 4" fill="none" stroke="#333" stroke-width="1.400"/>
<text x="70" y="53" font-family="Liberation Sans" font-size="8" font-weight="700" text-anchor="middle" fill="#333">ACTIONS</text>
<text x="69" y="76" font-family="Liberation Sans,Noto Sans CJK SC" font-size="12" text-anchor="middle" fill="#333">PS动作.atn</text>
</svg></div>

<div class="b" style="left:996px;top:841px;width:60px;height:32px;background:#fff;border:1px solid #dcdfe6;color:#555;font-size:13px">取消</div>
<div class="b" style="left:1070px;top:843px;width:56px;height:28px;background:#4285f4;color:#fff;font-size:13px;font-weight:700;border-radius:0;z-index:28">确认</div>

<!-- red annotations -->
<div class="r" style="left:37px;top:316px;width:77px;height:34px"></div>
<div class="r" style="left:34px;top:361px;width:79px;height:34px"></div>
<div class="r r4" style="left:208px;top:61px;width:91px;height:37px"></div>
<div class="r" style="left:1565px;top:292px;width:119px;height:34px"></div>
<div class="r r4" style="left:304px;top:176px;width:93px;height:33px"></div>
<div class="r r4" style="left:1040px;top:224px;width:102px;height:38px"></div>
<div class="r" style="left:367px;top:540px;width:178px;height:68px"></div>
<div class="r r4" style="left:1066px;top:839px;width:64px;height:36px"></div>

<div class="c" style="left:114px;top:316px">1</div>
<div class="c" style="left:114px;top:364px">2</div>
<div class="c" style="left:241px;top:97px">3</div>
<div class="c" style="left:1534px;top:293px">4</div>
<div class="c" style="left:335px;top:206px;z-index:28">5</div>
<div class="c" style="left:1143px;top:227px">6</div>
<div class="c" style="left:391px;top:608px">7</div>
<div class="c" style="left:1078px;top:811px;z-index:28">8</div>

</body>
</html>
